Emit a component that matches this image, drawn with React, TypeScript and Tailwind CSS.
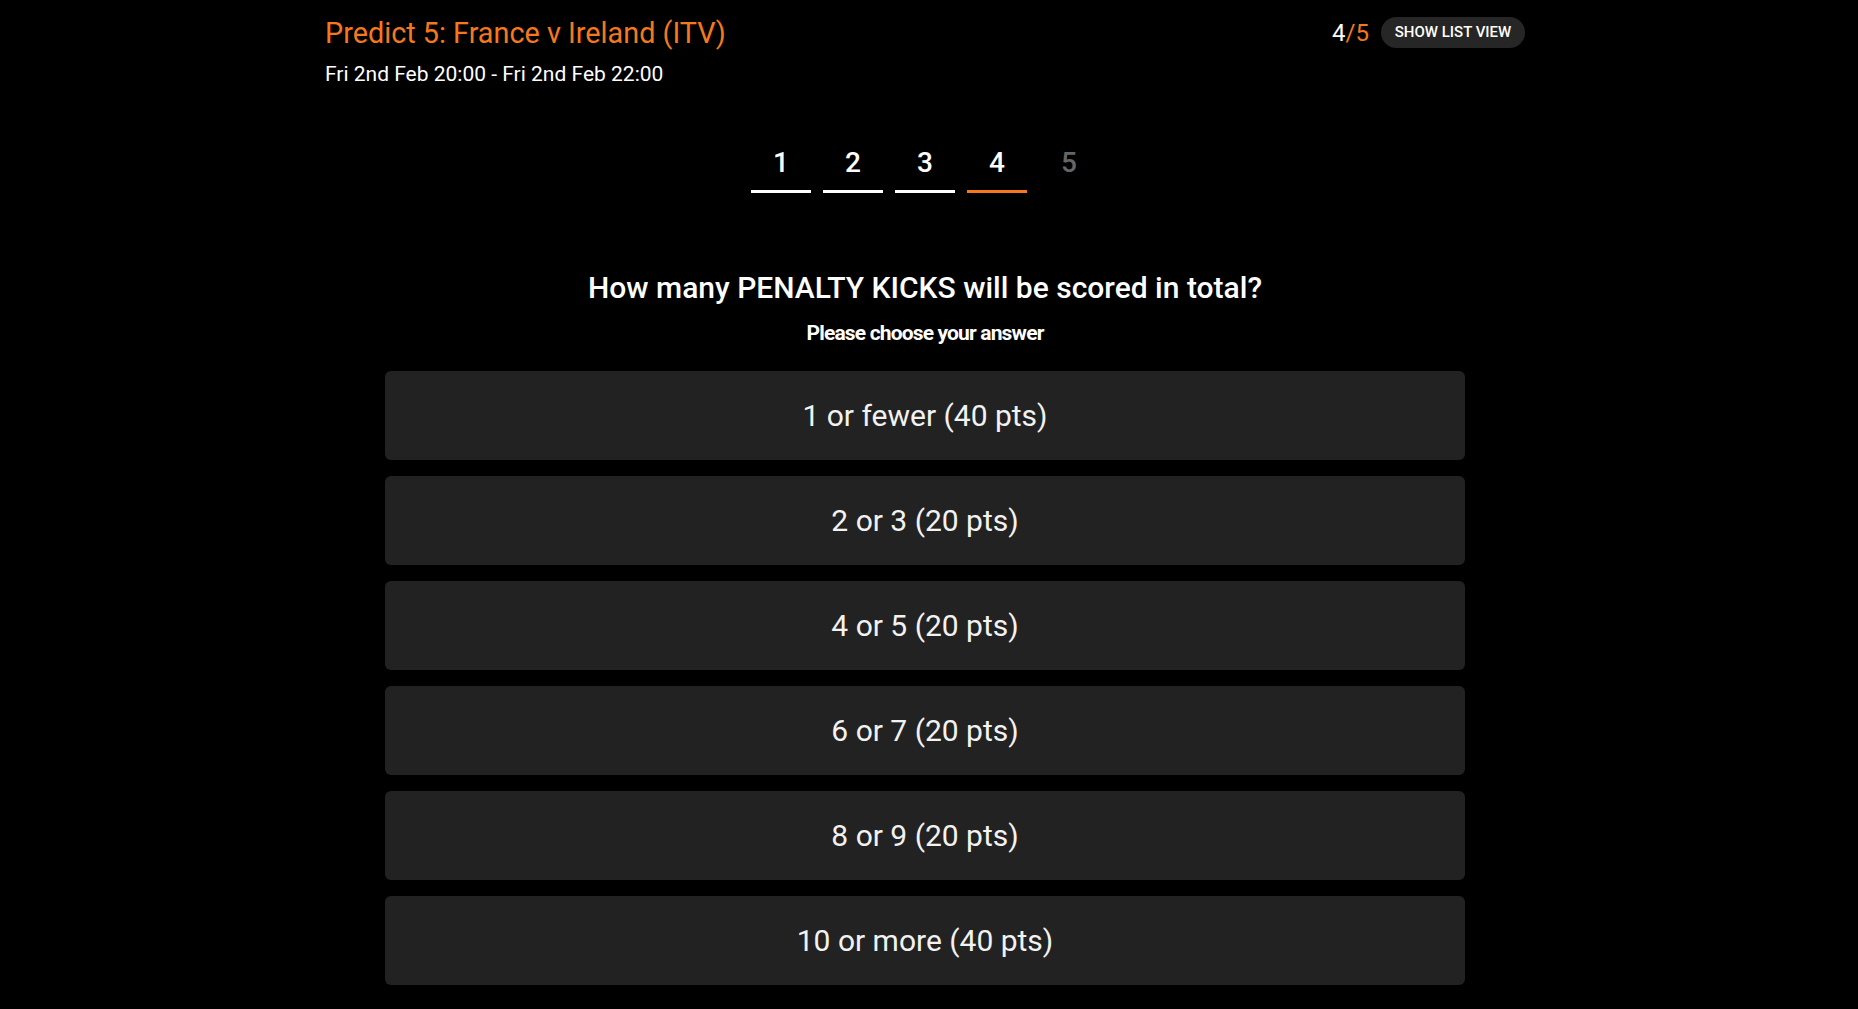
import React from "react";

const options = [
  "1 or fewer (40 pts)",
  "2 or 3 (20 pts)",
  "4 or 5 (20 pts)",
  "6 or 7 (20 pts)",
  "8 or 9 (20 pts)",
  "10 or more (40 pts)",
];

export default function App() {
  return (
    <div
      className="min-h-screen bg-black pr-2 text-white"
      style={{ fontFamily: "Roboto, 'Liberation Sans', sans-serif" }}
    >
      <div className="mx-auto w-[1200px]">
        <div className="flex items-start justify-between pt-[17px]">
          <div>
            <h1 className="text-[28.8px] leading-[32px] font-normal text-[#f5781f]">
              Predict 5: France v Ireland (ITV)
            </h1>
            <p className="mt-[13px] text-[21px] leading-[24px] text-white">
              Fri 2nd Feb 20:00 - Fri 2nd Feb 22:00
            </p>
          </div>
          <div className="flex items-center gap-[12px]">
            <span className="text-[24px] leading-[30px]">
              4<span className="text-[#f5781f]">/5</span>
            </span>
            <button className="h-[31px] w-[144px] rounded-full bg-[#262626] text-[15px] font-medium text-white">
              SHOW LIST VIEW
            </button>
          </div>
        </div>

        <div className="mt-[61px] flex justify-center gap-[12px]">
          {[1, 2, 3, 4, 5].map((n) => (
            <div key={n} className="flex w-[60px] flex-col items-center">
              <span
                className={
                  "text-[28px] leading-[32px] font-medium " +
                  (n === 5 ? "text-[#666666]" : "text-white")
                }
              >
                {n}
              </span>
              <div
                className={
                  "mt-[11px] h-[3px] w-full " +
                  (n === 4 ? "bg-[#f5781f]" : n === 5 ? "bg-transparent" : "bg-white")
                }
              />
            </div>
          ))}
        </div>

        <h2 className="mt-[79px] text-center text-[30px] leading-[32px] font-medium">
          How many PENALTY KICKS will be scored in total?
        </h2>
        <p className="mt-[17px] text-center text-[21px] leading-[24px] font-bold tracking-[-0.04em]">
          Please choose your answer
        </p>

        <div className="mx-[60px] mt-[26px] flex flex-col gap-[16px] pb-[24px]">
          {options.map((o) => (
            <button
              key={o}
              className="flex h-[89px] w-full items-center justify-center rounded-[6px] bg-[#222222] text-[30px] font-normal text-[#f2f2f2]"
            >
              {o}
            </button>
          ))}
        </div>
      </div>
    </div>
  );
}
